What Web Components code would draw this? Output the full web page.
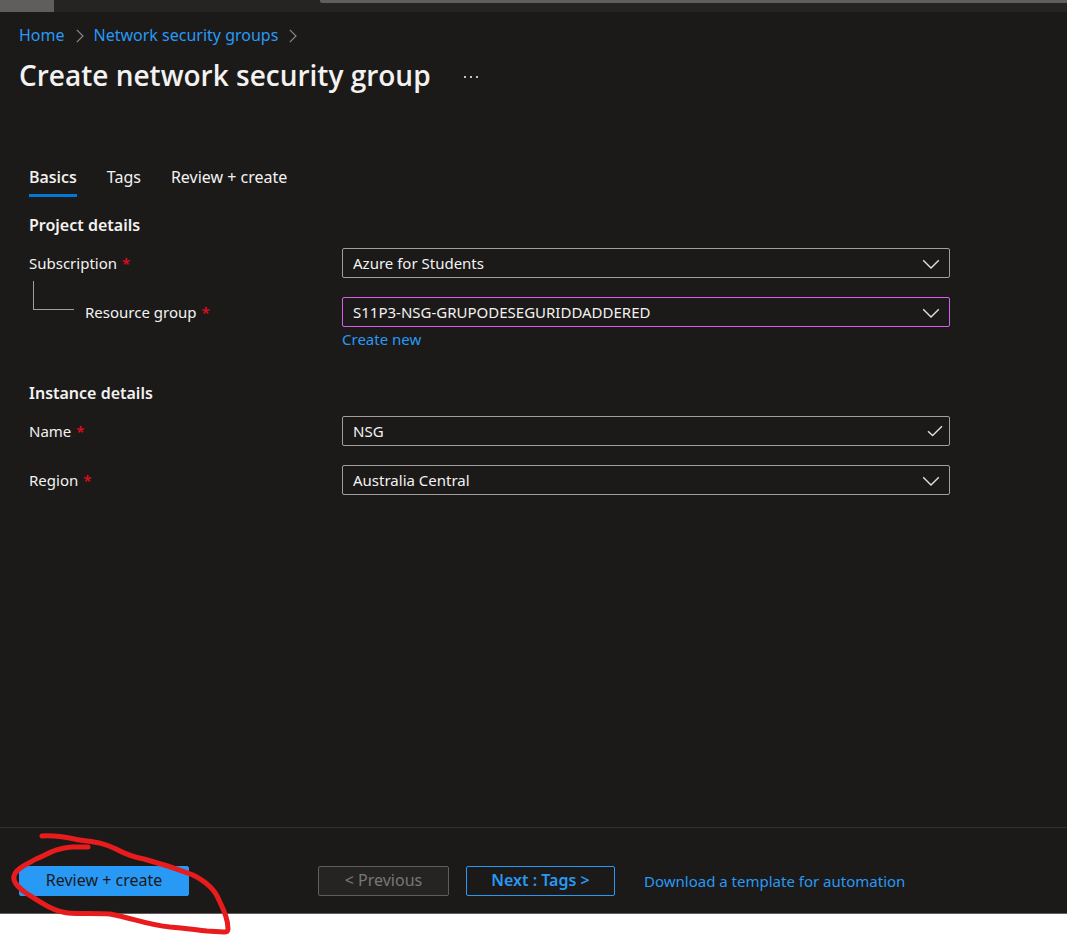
<!DOCTYPE html>
<html lang="en">
<head>
<meta charset="utf-8">
<title>Create network security group</title>
<style>
  :root {
    --bg: #1b1a19;
    --text: #f3f2f1;
    --link: #2899f5;
    --border: #a19f9d;
  }
  body {
    margin: 0;
    background: #fff;
    color: var(--text);
    font: 15px/20px "Noto Sans", "Open Sans", sans-serif;
  }
</style>
</head>
<body>
<portal-shell>
  <portal-topbar slot="top"></portal-topbar>
  <bread-crumbs slot="head">
    <crumb-link href="#home">Home</crumb-link>
    <crumb-link href="#nsg">Network security groups</crumb-link>
  </bread-crumbs>
  <blade-title slot="head">Create network security group</blade-title>
  <tab-strip>
    <tab-item selected>Basics</tab-item>
    <tab-item>Tags</tab-item>
    <tab-item>Review + create</tab-item>
  </tab-strip>
  <form-section heading="Project details">
    <form-field label="Subscription" value="Azure for Students"></form-field>
    <form-field nested changed label="Resource group" value="S11P3-NSG-GRUPODESEGURIDDADDERED"><text-link href="#new">Create new</text-link></form-field>
  </form-section>
  <form-section heading="Instance details">
    <form-field kind="text" label="Name" value="NSG"></form-field>
    <form-field label="Region" value="Australia Central"></form-field>
  </form-section>
  <action-bar slot="foot"></action-bar>
</portal-shell>

<script>
const define = (name, html, setup) => {
  const template = document.createElement('template');
  template.innerHTML = `<style>*{box-sizing:border-box}</style>` + html;
  customElements.define(name, class extends HTMLElement {
    constructor() {
      super();
      this.attachShadow({ mode: 'open' }).append(template.content.cloneNode(true));
    }
    connectedCallback() {
      if (setup) setup(this, this.shadowRoot);
    }
  });
};

define('portal-shell', `
  <style>
    :host { display: flex; flex-direction: column; min-height: 100vh; box-sizing: border-box; padding-bottom: 22px; }
    .blade { flex: 1; display: flex; flex-direction: column; background: var(--bg); border-bottom: 1px solid #605e5c; }
    header { padding: 12px 19px 0; }
    main { flex: 1; padding: 64px 29px 24px; }
  </style>
  <slot name="top"></slot>
  <div class="blade">
    <header><slot name="head"></slot></header>
    <main><slot></slot></main>
    <slot name="foot"></slot>
  </div>`);

define('portal-topbar', `
  <style>
    :host { display: flex; align-items: flex-start; height: 12px; background: #252423; }
    .menu { width: 54px; height: 12px; background: #605e5c; }
    .search { flex: 1; height: 3px; margin-left: 266px; background: #605e5c; border-bottom-left-radius: 2px; }
  </style>
  <div class="menu"></div><div class="search"></div>`);

define('bread-crumbs', `
  <style>
    :host { display: block; }
    nav { display: flex; height: 22px; align-items: center; font-size: 16px; line-height: 22px; }
  </style>
  <nav aria-label="Breadcrumb"><slot></slot></nav>`);

define('crumb-link', `
  <style>
    :host { display: flex; align-items: center; }
    a { color: var(--link); text-decoration: none; white-space: nowrap; }
    svg { width: 8px; height: 14px; margin: 2px 10px 0 11px; fill: none; stroke: #8a8886; stroke-width: 1.2; }
  </style>
  <a><slot></slot></a><svg viewBox="0 0 8 14" aria-hidden="true"><path d="M.8 .8 7 7 .8 13.200"/></svg>`,
  (el, root) => { root.querySelector('a').href = el.getAttribute('href'); });

define('blade-title', `
  <style>
    :host { display: flex; align-items: center; gap: 32px; height: 49px; margin: 4px 0 2px; }
    h1 { margin: 0; font-family: "Open Sans", sans-serif; font-size: 28px; line-height: 40px; font-weight: 600; }
    button { display: flex; padding: 0; border: 0; background: none; color: #fff; margin-top: 4px; }
    svg { width: 16px; height: 4px; fill: currentColor; }
  </style>
  <h1><slot></slot></h1>
  <button type="button" aria-label="More options"><svg viewBox="0 0 16 4"><circle cx="2" cy="2" r="1"/><circle cx="8" cy="2" r="1"/><circle cx="14" cy="2" r="1"/></svg></button>`);

define('tab-strip', `
  <style>
    :host { display: flex; gap: 30px; height: 32px; }
  </style>
  <slot></slot>`);

define('tab-item', `
  <style>
    :host { display: block; }
    button { height: 32px; padding: 0 0 6px; border: 0; border-bottom: 3px solid transparent; background: none; color: inherit; font: inherit; font-size: 16px; line-height: 22px; white-space: nowrap; }
    :host([selected]) button { font-family: "Open Sans", sans-serif; font-weight: 600; border-color: #0078d4; }
  </style>
  <button type="button"><slot></slot></button>`);

define('form-section', `
  <style>
    :host { display: block; padding-top: 16px; margin-bottom: 16px; }
    h2 { margin: 0 0 11px; font-size: 16px; line-height: 24px; font-weight: 600; }
    .rows { display: grid; gap: 19px; }
  </style>
  <h2></h2><div class="rows"><slot></slot></div>`,
  (el, root) => { root.querySelector('h2').textContent = el.getAttribute('heading'); });

define('form-field', `
  <style>
    :host { display: grid; grid-template-columns: 313px minmax(0, 608px); }
    .caption { display: flex; align-items: center; height: 30px; }
    .elbow { display: none; width: 41px; height: 29px; margin: -34px 11px 0 4px; border: solid var(--border); border-width: 0 0 1px 1px; }
    :host([nested]) .elbow { display: block; }
    .star { color: #e00b1c; margin-left: 5px; font-weight: 600; }
    .box { position: relative; height: 30px; }
    .box > select, .box > input { display: block; width: 100%; height: 30px; margin: 0; padding: 0 40px 0 10px; appearance: none; border: 1px solid var(--border); border-radius: 2px; background: var(--bg); color: inherit; font: inherit; outline: 0; }
    :host([changed]) select { border-color: #d65ff0; }
    svg { position: absolute; fill: none; stroke: #e1dfdd; stroke-width: 1.400; pointer-events: none; }
    .chevron { right: 10px; top: 11px; width: 18px; height: 10px; }
    .check { right: 7px; top: 9px; width: 16px; height: 12px; }
  </style>
  <div class="caption"><span class="elbow"></span><label for="control"></label><span class="star" aria-hidden="true">*</span></div>
  <div><div class="box"></div><slot></slot></div>`,
  (el, root) => {
    root.querySelector('label').textContent = el.getAttribute('label');
    const box = root.querySelector('.box');
    const text = el.getAttribute('kind') === 'text';
    const control = document.createElement(text ? 'input' : 'select');
    control.id = 'control';
    control.required = true;
    if (text) {
      control.type = 'text';
      control.value = el.getAttribute('value');
    } else {
      control.add(new Option(el.getAttribute('value')));
    }
    box.innerHTML = text
      ? '<svg class="check" viewBox="0 0 16 12" aria-hidden="true"><path d="M1 6.200 5.600 10.600 15 1.200"/></svg>'
      : '<svg class="chevron" viewBox="0 0 18 10" aria-hidden="true"><path d="M1.200 1.200 9 9 16.800 1.200"/></svg>';
    box.prepend(control);
  });

define('text-link', `
  <style>
    :host { display: block; margin-top: 2px; }
    a { color: var(--link); text-decoration: none; white-space: nowrap; }
  </style>
  <a><slot></slot></a>`,
  (el, root) => { root.querySelector('a').href = el.getAttribute('href'); });

define('push-button', `
  <style>
    :host { display: block; }
    button { width: 100%; height: 30px; padding: 0 0 2px; border: 1px solid var(--link); border-radius: 2px; background: none; color: var(--link); font: inherit; font-size: 16px; font-weight: 600; white-space: nowrap; }
    :host([primary]) button { background: var(--link); color: var(--bg); font-weight: 400; }
    :host([disabled]) button { background: #252423; border-color: #605e5c; color: #797775; font-weight: 400; }
  </style>
  <button type="button"><slot></slot></button>`,
  (el, root) => { root.querySelector('button').disabled = el.hasAttribute('disabled'); });

define('action-bar', `
  <style>
    :host { display: flex; align-items: center; position: relative; height: 86px; padding: 20px 19px 0; border-top: 1px solid #323130; box-sizing: border-box; }
    .review { width: 170px; margin-right: 129px; }
    .previous { width: 131px; margin-right: 17px; }
    .next { width: 149px; margin-right: 29px; }
    text-link { margin: 0; }
    .ink { position: absolute; left: 0; top: -1px; width: 240px; height: 109px; fill: none; stroke: #e81c1c; stroke-width: 5; stroke-linecap: round; stroke-linejoin: round; pointer-events: none; }
  </style>
  <push-button class="review" primary>Review + create</push-button>
  <push-button class="previous" disabled>&lt; Previous</push-button>
  <push-button class="next">Next : Tags &gt;</push-button>
  <text-link href="#template">Download a template for automation</text-link>
  <svg class="ink" viewBox="0 827 240 109" aria-hidden="true"><path d="M42 836C58 835 69 838 80 840C93 842 102 842 116 849C127 855 133 857 144 859C159 863 180 870 193 875C207 882 215 890 219 900C224 911 228 919 228 929Q228 932 224 932L207 931C196 930 186 928 170 927C148 925 132 918 110 914C96 913 80 914 68 913C54 912 40 902 26 893C16 886 13 880 14 876C16 868 28 864 36 859C48 854 56 848 72 847Q80 847 88 847"/></svg>`);
</script>
</body>
</html>
